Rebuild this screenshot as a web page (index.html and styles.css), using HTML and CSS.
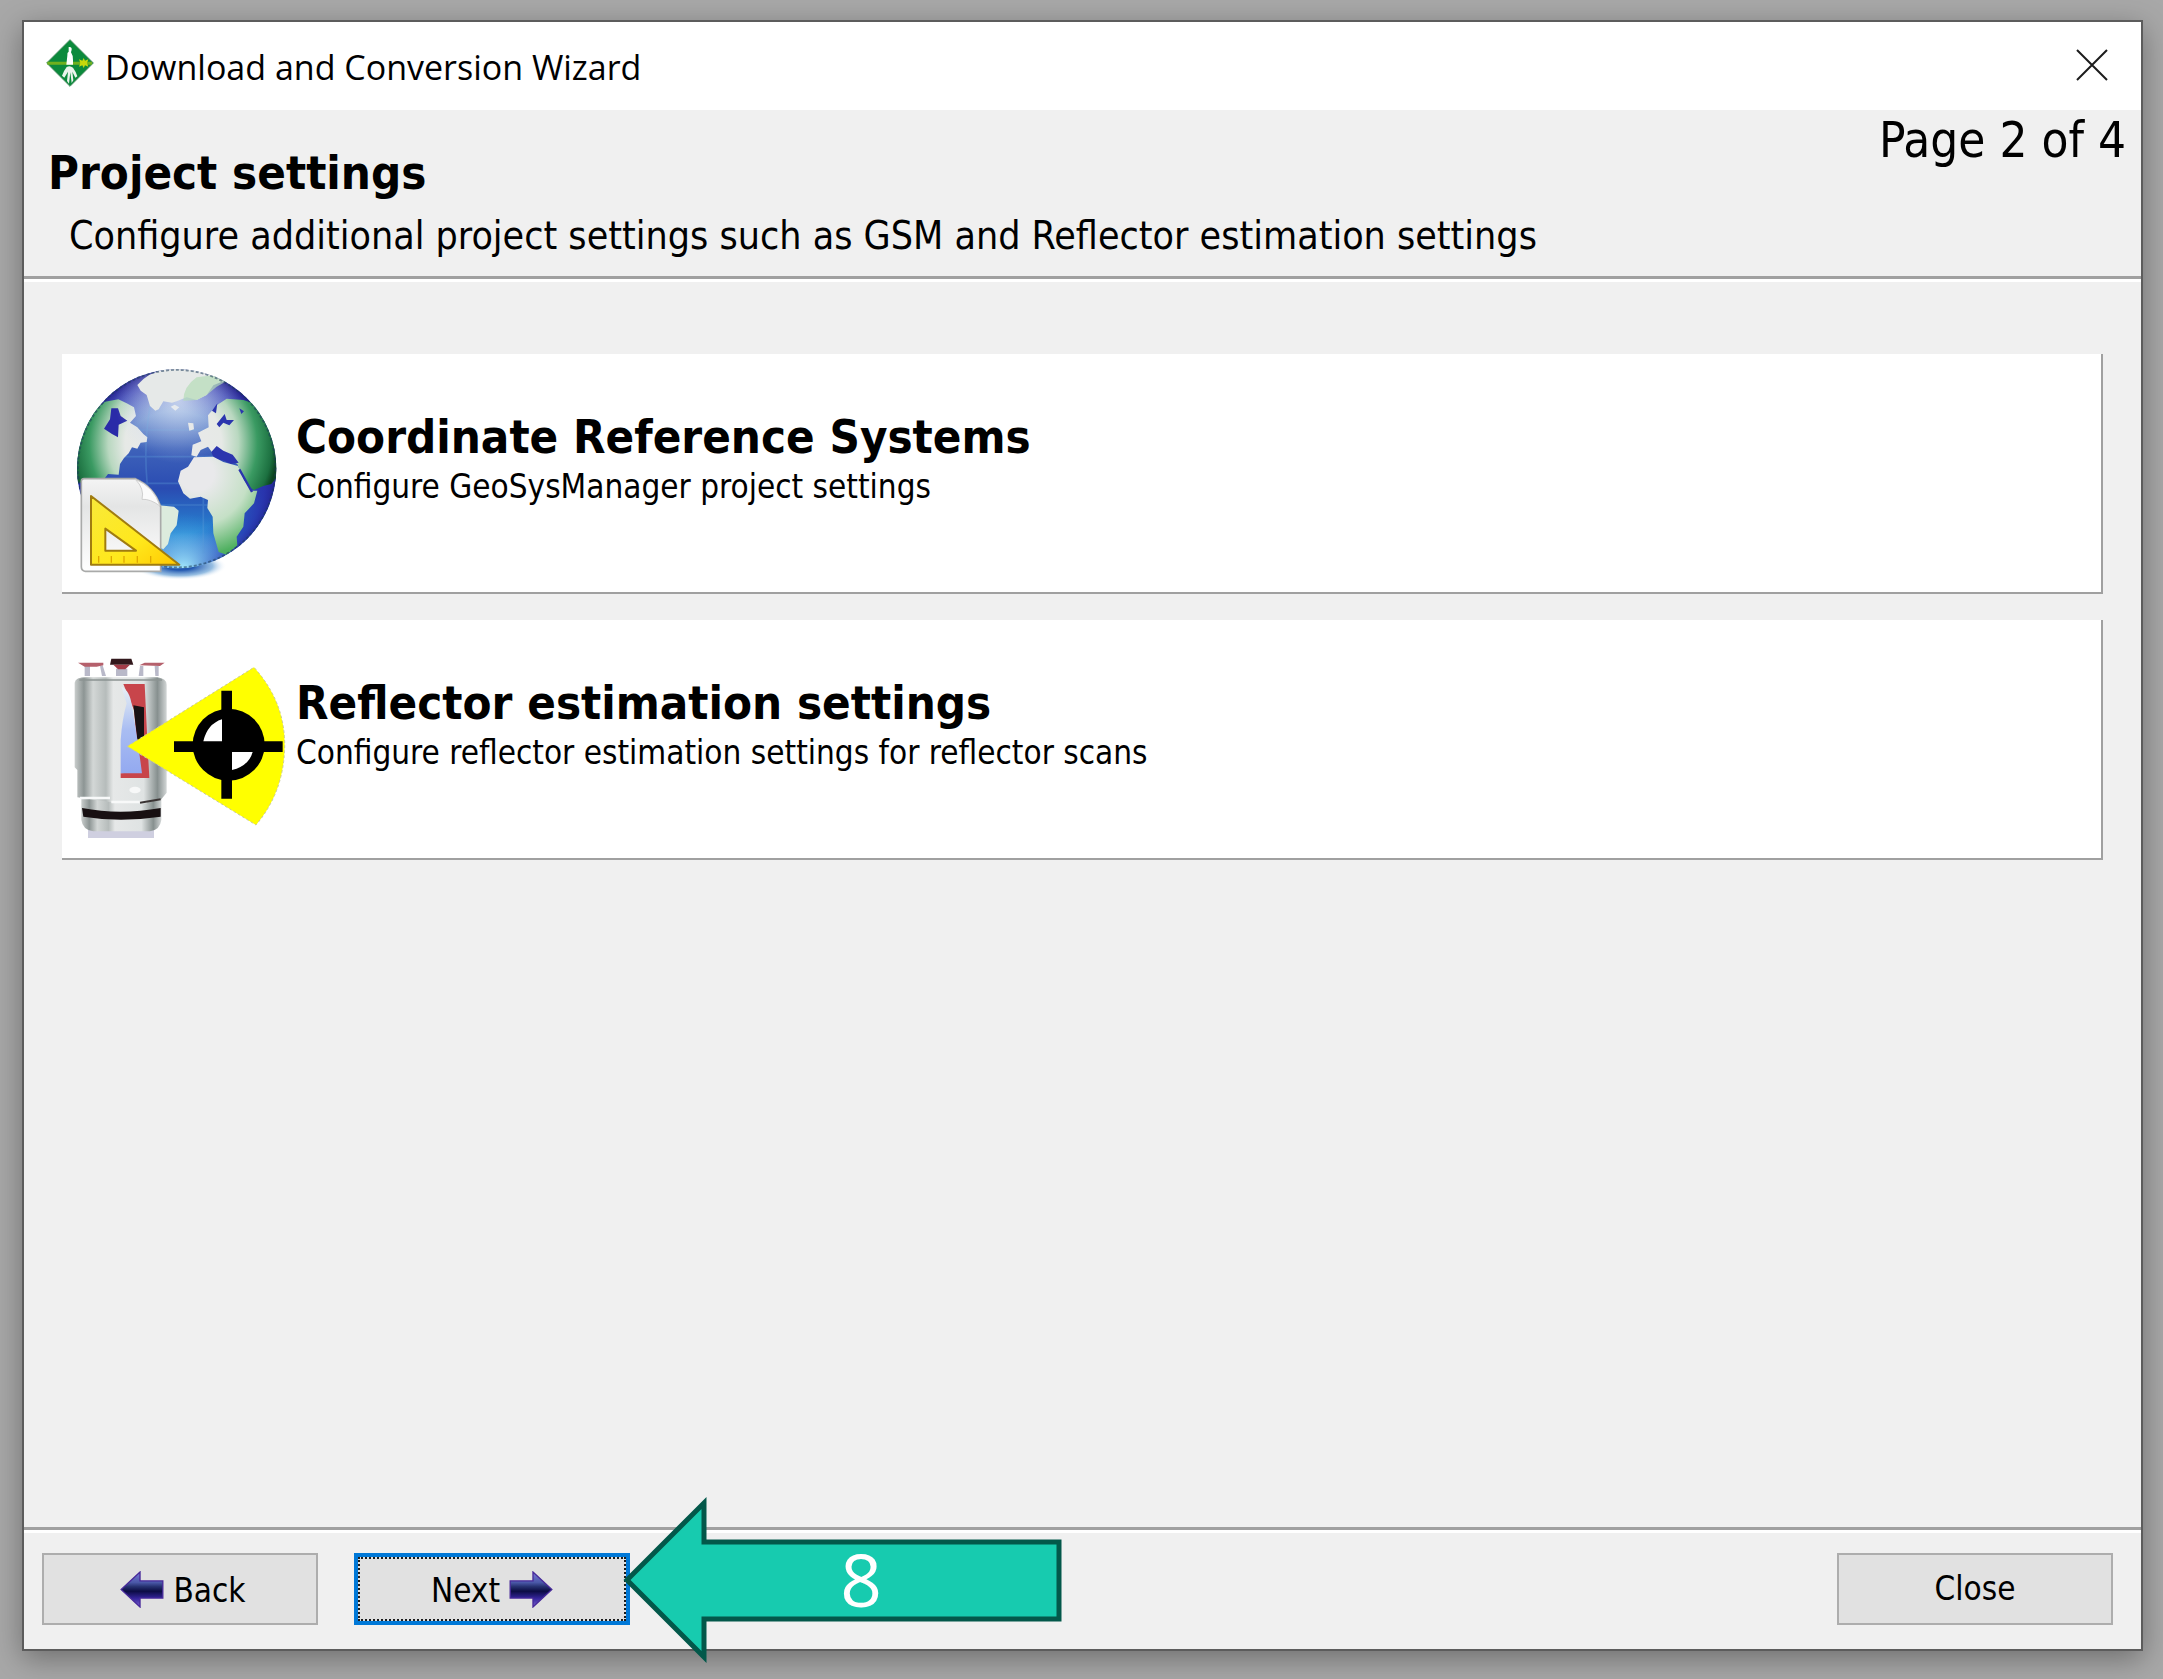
FILE: index.html
```html
<!DOCTYPE html>
<html lang="en">
<head>
<meta charset="utf-8">
<meta name="viewport" content="width=device-width, initial-scale=1">
<title>Download and Conversion Wizard</title>
<link rel="stylesheet" href="styles.css">
</head>
<body>
<div class="window">
  <header class="titlebar">
    <svg class="app-icon" viewBox="0 0 144 144" aria-hidden="true">
      <path d="M72 2 L142 72 L72 142 L2 72Z" fill="#0c8a3c" stroke="#4f8f66" stroke-width="3"/>
      <path d="M4 68 H138 V77 H4Z" fill="#6fb01e"/>
      <path d="M113 72 m-14 -11 l10 4 4 -8 4 8 10 -4 -4 11 4 11 -10 -4 -4 8 -4 -8 -10 4 4 -11z" fill="#c6d80c"/>
      <path d="M68 24 Q78 22 77 32 L75 40 Q82 50 81 64 L81 77 H61 L64 50 Q63 40 68 38Z" fill="#fff"/>
      <path d="M62 84 Q72 78 81 86 Q90 98 94 112 L88 116 L79 98 L82 124 L77 132 L73 100 L69 134 L63 126 L66 98 L55 116 L48 110 Q54 94 62 84Z" fill="#eaf4ec"/>
    </svg>
    <h1 class="window-title">Download and Conversion Wizard</h1>
    <button class="window-close" type="button" aria-label="Close window">
      <svg viewBox="0 0 32 32" aria-hidden="true"><path d="M1 1 L31 31 M31 1 L1 31" fill="none" stroke="#1c1c1c" stroke-width="2"/></svg>
    </button>
  </header>

  <section class="page-header">
    <div class="page-heading">
      <h2 class="page-title">Project settings</h2>
      <p class="page-subtitle">Configure additional project settings such as GSM and Reflector estimation settings</p>
    </div>
    <p class="page-count">Page 2 of 4</p>
  </section>

  <main class="options">
    <button class="option" type="button">
      <svg class="option-icon" viewBox="36 42 696 714" aria-hidden="true">
        <defs>
          <linearGradient id="sea" x1="0" y1="0" x2="0" y2="1">
            <stop offset="0" stop-color="#b9cbe8"/><stop offset=".2" stop-color="#86a5d8"/><stop offset=".4" stop-color="#3e62ba"/>
            <stop offset=".6" stop-color="#2a4cb2"/><stop offset=".82" stop-color="#2684d2"/><stop offset="1" stop-color="#9be6ff"/>
          </linearGradient>
          <radialGradient id="seaEdge" gradientUnits="userSpaceOnUse" cx="375" cy="400" r="310">
            <stop offset=".6" stop-color="#2a2ab0" stop-opacity="0"/><stop offset=".88" stop-color="#2828aa" stop-opacity=".7"/><stop offset="1" stop-color="#22208c"/>
          </radialGradient>
          <radialGradient id="haze" gradientUnits="userSpaceOnUse" cx="385" cy="180" r="190">
            <stop offset="0" stop-color="#e4ecf8" stop-opacity=".7"/><stop offset="1" stop-color="#c0d2f0" stop-opacity="0"/>
          </radialGradient>
          <radialGradient id="glow" gradientUnits="userSpaceOnUse" cx="400" cy="690" r="170">
            <stop offset="0" stop-color="#a8f0ff"/><stop offset="1" stop-color="#3a9be0" stop-opacity="0"/>
          </radialGradient>
          <radialGradient id="land" gradientUnits="userSpaceOnUse" cx="370" cy="310" r="315">
            <stop offset="0" stop-color="#e9e9eb"/><stop offset=".46" stop-color="#e6e9e6"/><stop offset=".62" stop-color="#b9d8c0"/>
            <stop offset=".8" stop-color="#3a9a62"/><stop offset=".94" stop-color="#1c7040"/><stop offset="1" stop-color="#0c4420"/>
          </radialGradient>
          <radialGradient id="southLand" gradientUnits="userSpaceOnUse" cx="440" cy="400" r="260">
            <stop offset=".2" stop-color="#e9e9eb"/><stop offset=".6" stop-color="#c5e0c6"/><stop offset=".95" stop-color="#4fb060"/>
          </radialGradient>
          <radialGradient id="foot">
            <stop offset=".3" stop-color="#2358b0"/><stop offset=".7" stop-color="#6ba3d6" stop-opacity=".7"/><stop offset="1" stop-color="#fff" stop-opacity="0"/>
          </radialGradient>
          <linearGradient id="paper" x1="0" y1="0" x2="0" y2="1">
            <stop offset="0" stop-color="#f4f4f4"/><stop offset=".3" stop-color="#e4e5e5"/><stop offset="1" stop-color="#fff"/>
          </linearGradient>
          <linearGradient id="rule" x1="0" y1="0" x2="1" y2="1">
            <stop offset="0" stop-color="#f8e93a"/><stop offset=".6" stop-color="#ffe81c"/><stop offset="1" stop-color="#ffc800"/>
          </linearGradient>
          <clipPath id="globe"><circle cx="380" cy="386" r="299"/></clipPath>
        </defs>
        <ellipse cx="390" cy="678" rx="140" ry="42" fill="url(#foot)"/>
        <g clip-path="url(#globe)">
          <circle cx="380" cy="386" r="299" fill="url(#sea)"/>
          <circle cx="380" cy="386" r="299" fill="url(#seaEdge)"/>
          <circle cx="400" cy="690" r="170" fill="url(#glow)"/>
          <path d="M215 270 H540 M205 350 H560 M215 430 H400 M320 495 H480 M300 200 Q275 350 300 490 M460 470 V640" fill="none" stroke="#5b9bd8" stroke-width="5" opacity=".35"/>
          <path d="M165 185 L205 178 L230 190 L252 202 L258 228 L240 248 L262 262 L280 282 L292 292 L290 306 L272 308 L262 326 L246 322 L236 340 L222 354 L210 372 L206 404 L174 402 L160 420 L70 430 L70 300 L120 220Z" fill="url(#land)"/>
          <path d="M184 205 L204 205 L212 228 L232 242 L206 254 L204 292 L186 282 L162 266 L180 238Z" fill="#2a2ba8"/>
          <circle cx="385" cy="180" r="190" fill="url(#haze)"/>
          <path d="M262 135 Q300 90 370 84 H450 L520 124 L490 136 L470 165 L440 180 L410 172 L380 184 L366 188 L340 184 L326 208 L316 212 L300 198 L290 165 L272 152Z" fill="#e6e9e8"/>
          <path d="M400 182 Q400 140 440 112 L500 104 L540 118 L500 140 L470 165 L440 180Z" fill="#b5dbb8" opacity=".7"/>
          <path d="M362 200 L374 194 L388 202 L376 212Z" fill="#e6eaee"/>
          <path d="M414 248 L430 250 L432 268 L418 272Z M444 278 L476 262 L474 226 L500 196 L530 176 L580 180 L640 200 L690 300 V400 L664 432 L640 438 L612 450 L596 440 L570 394 L562 372 L520 350 L508 326 L488 340 L474 320 L452 330 L440 350 L424 346 L428 314 L454 304Z" fill="url(#land)"/>
          <path d="M486 212 L502 190 L498 220Z M524 222 L530 240 L552 240 L538 256 L520 248 L508 262 L500 252Z M568 205 L582 214 L574 222Z M500 318 L520 332 L548 344 L566 368 L542 372 L522 362 L492 356 L484 336Z" fill="#2b35ae"/>
          <path d="M432 352 L490 350 L520 366 L564 378 L582 420 L604 452 L622 452 L612 490 L584 520 L580 560 L560 590 L562 616 L530 644 L506 636 L490 580 L488 530 L472 504 L474 480 L452 470 L420 476 L400 460 L384 424 L392 392 L414 380Z" fill="url(#southLand)"/>
          <path d="M568 388 L586 420 L606 456" fill="none" stroke="#2b35ae" stroke-width="7"/>
          <path d="M326 496 L372 500 L386 512 L380 556 L362 580 L354 612 L340 628 L326 620Z" fill="#dcebdd"/>
          <circle cx="380" cy="386" r="297" fill="none" stroke="#1c3a5a" stroke-width="7" stroke-dasharray="9 6" opacity=".55"/>
        </g>
        <path d="M102 416 H256 Q312 440 332 500 V694 H106 Q94 692 94 680 V424 Q94 416 102 416Z" fill="url(#paper)" stroke="#a9aaa9" stroke-width="5"/>
        <path d="M256 418 Q312 440 330 498 Q300 476 276 478 Q284 446 256 418Z" fill="#fbfbfb" stroke="#cfcfcf" stroke-width="3"/>
        <path fill-rule="evenodd" d="M123 468 L388 674 H123Z M166 566 V632 H258Z" fill="url(#rule)" stroke="#a07c10" stroke-width="6" stroke-linejoin="round"/>
        <path d="M146 648 V668 M184 648 V668 M222 648 V668 M262 648 V668 M302 648 V668" stroke="#e0a800" stroke-width="4"/>
      </svg>
      <span class="option-text">
        <span class="option-title">Coordinate Reference Systems</span>
        <span class="option-desc">Configure GeoSysManager project settings</span>
      </span>
    </button>

    <button class="option" type="button">
      <svg class="option-icon" viewBox="36 -30 696 714" aria-hidden="true">
        <defs>
          <linearGradient id="metal" x1="0" y1="0" x2="1" y2="0">
            <stop offset="0" stop-color="#c9cdcc"/><stop offset=".1" stop-color="#8d9594"/><stop offset=".2" stop-color="#d3d7d6"/>
            <stop offset=".34" stop-color="#b6bcbb"/><stop offset=".42" stop-color="#e6e8e8"/><stop offset=".75" stop-color="#dfe3e3"/>
            <stop offset=".9" stop-color="#87908f"/><stop offset="1" stop-color="#d2d6d6"/>
          </linearGradient>
          <linearGradient id="lens" x1="0" y1="0" x2="0" y2="1">
            <stop offset="0" stop-color="#e8f0f4"/><stop offset=".5" stop-color="#a9bdf2"/><stop offset="1" stop-color="#93a9f0"/>
          </linearGradient>
        </defs>
        <path d="M104 108 H120 V138 H104Z M150 108 L158 106 L168 138 H156Z M270 108 H280 V138 H266Z M314 108 H326 V138 H316Z M198 116 H232 V138 H198Z" fill="#b9b9c9"/>
        <path d="M84 98 H160 V106 L140 110 H104Z M268 106 L284 98 H344 L330 108Z" fill="#b5606c"/>
        <path d="M184 86 H244 L250 104 H180Z" fill="#32181c"/>
        <path d="M190 104 H240 L226 118 H204Z" fill="#a33c48"/>
        <path d="M114 596 H312 V624 H114Z" fill="#cfcfe0"/>
        <path d="M94 500 H334 V570 Q330 600 300 604 H130 Q98 600 94 570Z" fill="url(#metal)"/>
        <path d="M96 534 Q210 556 332 534 V560 Q210 578 100 560Z" fill="#181012"/>
        <path d="M74 158 Q76 142 110 142 H322 Q350 146 350 164 V488 L334 508 Q240 526 180 516 L82 502 V420 L74 412Z" fill="url(#metal)"/>
        <path d="M88 150 H336" stroke="#8b9392" stroke-width="5"/>
        <path d="M180 504 H90 M184 516 H290" stroke="#f8f9f9" stroke-width="7"/>
        <path d="M270 518 L332 508" stroke="#3a3434" stroke-width="6"/>
        <path d="M220 162 H284 L292 330 L298 444 H212 V430 L268 426 L252 240Z" fill="#c8454b"/>
        <path d="M250 226 L282 232 L282 330 H262Z" fill="#181214"/>
        <path d="M214 170 Q240 180 246 230 Q262 320 276 430 H212 V330 Q216 270 230 220 Z" fill="url(#lens)"/>
        <ellipse cx="255" cy="480" rx="17" ry="10" fill="#f7f8f8"/>
        <path d="M232 349 L612 112 Q706 216 704 349 Q702 486 618 585Z" fill="#ff0" stroke="#c9c99a" stroke-width="3" stroke-dasharray="8 7"/>
        <path d="M514 182 H546 V506 H514Z M372 334 H698 V366 H372Z" fill="#000"/>
        <circle cx="536" cy="344" r="108" fill="#000"/>
        <path d="M516 268 V334 H460 Q472 282 516 268Z M546 366 H608 Q596 408 546 420Z" fill="#fff"/>
      </svg>
      <span class="option-text">
        <span class="option-title">Reflector estimation settings</span>
        <span class="option-desc">Configure reflector estimation settings for reflector scans</span>
      </span>
    </button>
  </main>

  <footer class="actions">
    <button class="action action-step" type="button">
      <svg class="action-arrow" viewBox="0 0 132 112" aria-hidden="true">
        <defs>
          <linearGradient id="arrow" x1="0" y1="0" x2="0" y2="1">
            <stop offset="0" stop-color="#7a7ad8"/><stop offset=".3" stop-color="#4a58a8"/><stop offset=".42" stop-color="#25306e"/>
            <stop offset=".55" stop-color="#0c0c44"/><stop offset=".75" stop-color="#34249a"/><stop offset="1" stop-color="#7a62d0"/>
          </linearGradient>
        </defs>
        <path d="M3 56 L60 3 V30 H129 V82 H60 V109Z" fill="url(#arrow)" stroke="#47299a" stroke-width="4"/>
      </svg>
      <span class="action-label">Back</span>
    </button>
    <div class="action-slot">
      <button class="action action-default" type="button">
        <span class="action-label">Next</span>
        <svg class="action-arrow" viewBox="0 0 132 112" aria-hidden="true">
          <path d="M129 56 L72 3 V30 H3 V82 H72 V109Z" fill="url(#arrow)" stroke="#47299a" stroke-width="4"/>
        </svg>
      </button>
      <svg class="callout" viewBox="0 0 446 180" role="img" aria-label="Step 8">
        <path d="M7 90 L84 13 V52 H439 V129 H84 V167Z" fill="#17cbaf" stroke="#03584a" stroke-width="5"/>
        <text class="callout-text" x="241" y="117" text-anchor="middle">8</text>
      </svg>
    </div>
    <button class="action action-close" type="button">Close</button>
  </footer>
</div>
</body>
</html>
```
FILE: styles.css
```css
* {
  box-sizing: border-box;
}

body {
  margin: 0;
  min-height: 100vh;
  display: flex;
  padding: 20px 20px 28px 22px;
  background: #a8a8a8;
  color: #000;
  font-family: "DejaVu Sans Condensed", "DejaVu Sans", Tahoma, sans-serif;
}

h1,
h2,
p {
  margin: 0;
}

button {
  margin: 0;
  padding: 0;
  border: 0;
  border-radius: 0;
  color: inherit;
  font: inherit;
}

.window {
  flex: 1;
  display: flex;
  flex-direction: column;
  min-width: 0;
  border: 2px solid #5c5c5c;
  background: #f0f0f0;
  box-shadow: 0 8px 28px rgba(0, 0, 0, .34);
}

/* Title bar */
.titlebar {
  display: flex;
  align-items: flex-start;
  gap: 11px;
  height: 88px;
  padding-left: 22px;
  background: #fff;
}

.app-icon {
  width: 48px;
  height: 48px;
  margin-top: 17px;
}

.window-title {
  flex: 1;
  margin-top: 17px;
  font: 400 34px/56px "Open Sans", "Segoe UI", sans-serif;
}

.window-close {
  width: 98px;
  height: 86px;
  background: none;
}

.window-close svg {
  display: block;
  width: 32px;
  height: 32px;
  margin: auto;
}

/* Page heading */
.page-header {
  display: flex;
  justify-content: space-between;
  align-items: flex-start;
  padding: 3px 15px 16px 24px;
}

.page-heading {
  flex: 1;
  padding-top: 32px;
}

.page-title {
  font-size: 47px;
  font-weight: 700;
  line-height: 56px;
}

.page-subtitle {
  margin-top: 11px;
  padding-left: 21px;
  font-size: 39px;
  line-height: 48px;
}

.page-count {
  font-size: 49px;
  line-height: 56px;
}

/* Option cards, between two etched rules */
.options {
  flex: 1;
  display: flex;
  flex-direction: column;
  gap: 26px;
  padding: 75px 38px;
  border-top: 3px solid #a0a0a0;
  border-bottom: 3px solid #a0a0a0;
  box-shadow: inset 0 3px #fff, 0 3px #fff;
}

.option {
  display: flex;
  align-items: flex-start;
  gap: 2px;
  height: 240px;
  border-right: 2px solid #a0a0a0;
  border-bottom: 2px solid #a0a0a0;
  background: #fff;
  text-align: left;
}

.option-icon {
  flex: none;
  width: 232px;
  height: 238px;
}

.option-text {
  display: flex;
  flex-direction: column;
  gap: 2px;
  padding-top: 55px;
}

.option-title {
  font-size: 47px;
  font-weight: 700;
  line-height: 56px;
}

.option-desc {
  font-size: 33px;
  line-height: 40px;
}

/* Bottom buttons */
.actions {
  display: flex;
  gap: 36px;
  padding: 23px 28px 24px 18px;
}

.action-slot {
  position: relative;
}

.action {
  display: flex;
  align-items: center;
  justify-content: center;
  gap: 9px;
  width: 276px;
  height: 72px;
  border: 2px solid #adadad;
  background: #e1e1e1;
  font-size: 33px;
  line-height: 40px;
}

.action-step {
  padding-left: 6px;
}

.action-label {
  padding-top: 4px;
}

.action-default {
  border: 4px solid #0078d7;
  outline: 2px dotted #1c1c1c;
  outline-offset: -6px;
}

.action-close {
  margin-left: auto;
}

.action-arrow {
  width: 44px;
  height: 37px;
}

/* Step marker pointing at the default button */
.callout {
  position: absolute;
  left: 266px;
  top: -63px;
  width: 446px;
  height: 180px;
}

.callout-text {
  fill: #fff;
  font-family: "Open Sans", "Segoe UI", sans-serif;
  font-size: 73px;
}
```
